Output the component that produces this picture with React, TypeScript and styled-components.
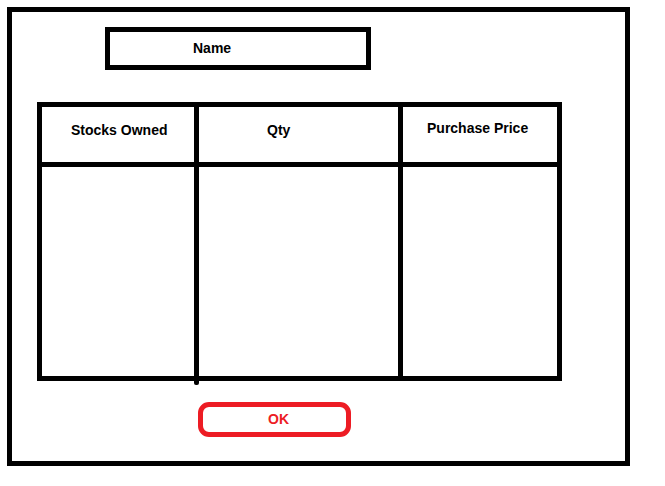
import React from 'react';
import styled, { createGlobalStyle } from 'styled-components';

const GlobalStyle = createGlobalStyle`
  * {
    box-sizing: border-box;
  }

  body {
    margin: 0;
    padding: 0;
    background: #ffffff;
    font-family: "Liberation Sans", Arial, sans-serif;
  }
`;

const Frame = styled.div`
  margin: 7px 0 0 7px;
  width: 623px;
  height: 459px;
  border: 5px solid #000000;
  display: flex;
  flex-direction: column;
  align-items: flex-start;
  padding-top: 15px;
`;

const NameBox = styled.div`
  margin-left: 93px;
  width: 266px;
  height: 43px;
  border: 5px solid #000000;
  display: flex;
  align-items: center;
  padding: 0 0 2px 83px;
  font-size: 14px;
  font-weight: 700;
  line-height: 16px;
  color: #000000;
`;

const Table = styled.div`
  position: relative;
  margin: 32px 0 0 25px;
  display: grid;
  grid-template-columns: 152px 199px 154px;
  grid-template-rows: 55px 209px;
  gap: 5px;
  padding: 5px;
  background: #000000;

  /* the first divider runs a little past the bottom edge */
  &::after {
    content: '';
    position: absolute;
    left: 157px;
    top: 100%;
    width: 5px;
    height: 4px;
    background: #000000;
    border-radius: 0 0 2px 2px;
  }
`;

const HeadCell = styled.div<{ $top: number; $left: number }>`
  background: #ffffff;
  padding: ${(p) => p.$top}px 0 0 ${(p) => p.$left}px;
  font-size: 14px;
  font-weight: 700;
  line-height: 16px;
  color: #000000;
  white-space: nowrap;
`;

const BodyCell = styled.div`
  background: #ffffff;
`;

const OkButton = styled.button`
  margin: 21px 0 0 186px;
  width: 153px;
  height: 35px;
  border: 5px solid #ed1c24;
  border-radius: 11px;
  background: #ffffff;
  padding: 0 0 2px 8px;
  font-family: "Liberation Sans", Arial, sans-serif;
  font-size: 14px;
  font-weight: 700;
  line-height: 16px;
  color: #ed1c24;
`;

const columns = [
  { label: 'Stocks Owned', top: 15, left: 29 },
  { label: 'Qty', top: 15, left: 68 },
  { label: 'Purchase Price', top: 13, left: 24 },
];

export const App = () => {
  return (
    <>
      <GlobalStyle />
      <Frame>
        <NameBox>Name</NameBox>
        <Table>
          {columns.map((c) => (
            <HeadCell key={c.label} $top={c.top} $left={c.left}>
              {c.label}
            </HeadCell>
          ))}
          {columns.map((c) => (
            <BodyCell key={`body-${c.label}`} />
          ))}
        </Table>
        <OkButton>OK</OkButton>
      </Frame>
    </>
  );
};

export default App;
